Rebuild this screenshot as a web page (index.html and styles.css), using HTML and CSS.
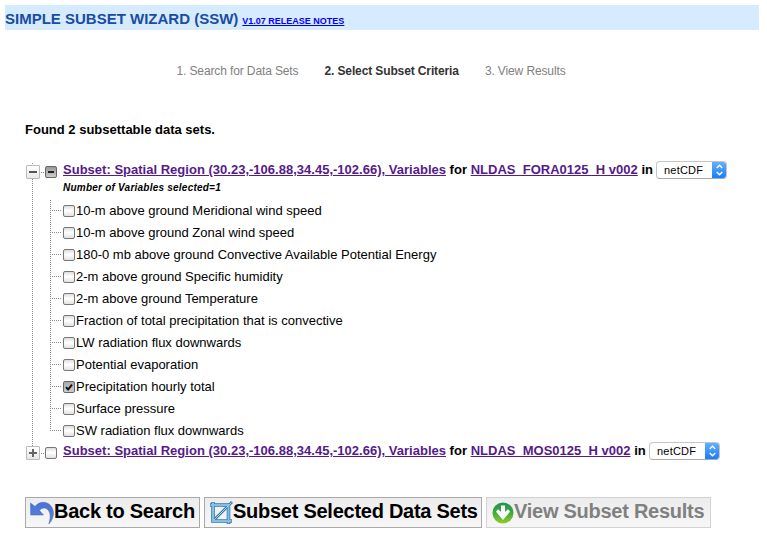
FILE: index.html
```html
<!DOCTYPE html>
<html lang="en">
<head>
<meta charset="utf-8">
<title>Simple Subset Wizard (SSW)</title>
<link rel="stylesheet" href="styles.css">
</head>
<body>
<header class="banner"><h1>SIMPLE SUBSET WIZARD (SSW)</h1><a href="#">V1.07 RELEASE NOTES</a></header>
<nav class="steps"><span>1. Search for Data Sets</span><span class="current">2. Select Subset Criteria</span><span>3. View Results</span></nav>
<p class="found">Found 2 subsettable data sets.</p>
<main class="tree">
  <section class="node first">
    <div class="node-head">
      <span class="toggle"></span><span class="dots"></span><span class="check partial"></span>
      <div class="title"><a href="#">Subset: Spatial Region (30.23,-106.88,34.45,-102.66), Variables</a> for <a href="#">NLDAS_FORA0125_H v002</a> in</div>
      <div class="select"><span>netCDF</span><svg viewBox="0 0 15 18"><path d="M4.7 7 7.5 4.2 10.3 7M4.7 11 7.5 13.8 10.3 11"/></svg></div>
    </div>
    <p class="note">Number of Variables selected=1</p>
    <ul class="vars">
      <li><span class="check"></span><span>10-m above ground Meridional wind speed</span></li>
      <li><span class="check"></span><span>10-m above ground Zonal wind speed</span></li>
      <li><span class="check"></span><span>180-0 mb above ground Convective Available Potential Energy</span></li>
      <li><span class="check"></span><span>2-m above ground Specific humidity</span></li>
      <li><span class="check"></span><span>2-m above ground Temperature</span></li>
      <li><span class="check"></span><span>Fraction of total precipitation that is convective</span></li>
      <li><span class="check"></span><span>LW radiation flux downwards</span></li>
      <li><span class="check"></span><span>Potential evaporation</span></li>
      <li><span class="check on"><svg viewBox="0 0 10 10"><path d="M2 5.2 4.1 7.5 8 2.6"/></svg></span><span>Precipitation hourly total</span></li>
      <li><span class="check"></span><span>Surface pressure</span></li>
      <li><span class="check"></span><span>SW radiation flux downwards</span></li>
    </ul>
  </section>
  <section class="node last">
    <div class="node-head">
      <span class="toggle plus"></span><span class="dots"></span><span class="check"></span>
      <div class="title mos"><a href="#">Subset: Spatial Region (30.23,-106.88,34.45,-102.66), Variables</a> for <a href="#">NLDAS_MOS0125_H v002</a> in</div>
      <div class="select"><span>netCDF</span><svg viewBox="0 0 15 18"><path d="M4.7 7 7.5 4.2 10.3 7M4.7 11 7.5 13.8 10.3 11"/></svg></div>
    </div>
  </section>
</main>
<footer class="actions">
  <button class="back"><svg viewBox="0 0 24 24"><defs><linearGradient id="b" x2="0" y2="1"><stop stop-color="#4773d8"/><stop offset="1" stop-color="#6484cb"/></linearGradient></defs><path fill="url(#b)" stroke="#3b61bd" stroke-width=".5" d="M.5 2 5 5.500C9 .4 16 .1 20 4c5 5 4.500 13-1.200 19C21 16 20.500 11 17.500 8.500 14.500 6 11.500 7 9.500 9.500L13.500 14H.7Z"/></svg><span>Back to Search</span></button>
  <button class="subset"><svg viewBox="0 0 24 24"><g fill="none" stroke="#3679aa" stroke-width="3.600"><path d="M4 1v19H23M1 4h18.500V23"/><path stroke-width="2.600" d="M5 19 23 1"/></g><g fill="none" stroke="#82bfe7" stroke-width="2"><path d="M4 1.500v18.500H22.500M1.500 4h18V22.500"/></g><path d="M5 19 22.500 1.500" stroke="#a5d3ef" stroke-width="1"/></svg><span>Subset Selected Data Sets</span></button>
  <button class="view" disabled><svg viewBox="0 0 22 22"><defs><linearGradient id="g" x2="0" y2="1"><stop stop-color="#199653"/><stop offset=".5" stop-color="#43a83d"/><stop offset="1" stop-color="#8fce28"/></linearGradient></defs><circle cx="11" cy="11" r="10.500" fill="url(#g)"/><path fill="#fff" d="M9 3.500h4v6.500l3-2.700 2 2.400-7 8.300-7-8.300 2-2.400 3 2.700Z"/></svg><span>View Subset Results</span></button>
</footer>
</body>
</html>
```
FILE: styles.css
```css
* { box-sizing: border-box; }
body { margin: 0; padding: 5px 8px 0 5px; width: 767px; height: 545px; overflow: hidden; background: #fff; color: #000; font: 13px "Liberation Sans", Arial, sans-serif; }
h1, p, ul { margin: 0; padding: 0; }
.banner { height: 25px; background: #d7ebff; display: flex; align-items: baseline; gap: 4px; line-height: 27px; }
.banner h1 { font-size: 15px; color: #194ca3; white-space: nowrap; }
.banner a { font-size: 9px; font-weight: bold; color: #00f; }
.steps { height: 16px; margin: 33px 0 0 171.500px; display: flex; gap: 26px; font-size: 12px; line-height: 16px; color: #808080; white-space: nowrap; letter-spacing: -.12px; }
.steps .current { font-weight: bold; color: #333; }
.found { margin: 43px 0 0 20px; height: 16px; line-height: 16px; font-weight: bold; }
.tree { margin: 22px 0 0 20px; height: 302px; }
.node.first { height: 281px; background: repeating-linear-gradient(#888 0 1px, transparent 1px 2px) 7px 3px / 1px 278px no-repeat; }
.node.last { background: repeating-linear-gradient(#888 0 1px, transparent 1px 2px) 7px 0 / 1px 6px no-repeat; }
.node-head { display: flex; height: 20px; padding-left: 1px; }
.toggle { width: 14px; height: 14px; margin-top: 5px; border: 1px solid #bbb; border-radius: 1px; background: linear-gradient(#555, #555) center / 8px 2px no-repeat, linear-gradient(#fff, #e8e8e8); }
.plus { background: linear-gradient(#666, #666) center / 8px 2px no-repeat, linear-gradient(#666, #666) center / 2px 8px no-repeat, linear-gradient(#fff, #e8e8e8); }
.dots { width: 5px; height: 1px; margin-top: 12px; background: repeating-linear-gradient(90deg, transparent 0 1px, #888 1px 2px); }
.check { display: block; flex: none; width: 12px; height: 12px; border: 1px solid #777; border-radius: 2px; background: linear-gradient(#ddd, #fff 45%, #e2e2e2); }
.node-head .check { margin-top: 6px; }
.node-head .partial { background: linear-gradient(#222, #222) center / 6px 2px no-repeat, linear-gradient(#999, #ccc); border-color: #666; }
.on { background: linear-gradient(#aaa, #ccc); border-color: #666; }
.on svg { display: block; width: 10px; height: 10px; fill: none; stroke: #111; stroke-width: 2; }
.title { width: 587px; margin-left: 6px; line-height: 19px; font-weight: bold; white-space: nowrap; letter-spacing: .012px; }
.title.mos { width: 580px; }
.title a { color: #551a8b; text-decoration: underline; }
.select { width: 71px; height: 18px; margin-top: 1px; margin-left: 6px; border: 1px solid #c5c5c5; border-bottom-color: #aaa; border-radius: 4px; display: flex; justify-content: space-between; font-size: 11px; line-height: 17px; overflow: hidden; letter-spacing: .2px; }
.select span { padding-left: 7px; }
.select svg { width: 15px; height: 18px; margin: -1px -1px 0 0; background: linear-gradient(#69b2fa, #147afa); fill: none; stroke: #fff; stroke-width: 1.4; }
.note { margin: 1px 0 0 38px; height: 13px; line-height: 13px; font-size: 10px; font-weight: bold; font-style: italic; letter-spacing: .23px; }
.vars { list-style: none; margin: 6px 0 0 25px; height: 241px; background: repeating-linear-gradient(#888 0 1px, transparent 1px 2px) 0 0 / 1px 232px no-repeat; }
.vars li { height: 22px; display: flex; align-items: center; line-height: 22px; padding-left: 13px; gap: 1px; white-space: nowrap; background: repeating-linear-gradient(90deg, #888 0 1px, transparent 1px 2px) 0 10px / 12px 1px no-repeat; }
.actions { display: flex; gap: 4px; margin: 35px 0 0 20px; }
.actions button { height: 31px; border: 1px solid #a9a9a9; background: linear-gradient(#ececec, #f7f7f7); font: bold 20px "Liberation Sans", Arial, sans-serif; letter-spacing: -.26px; color: #000; padding: 0 0 0 4px; display: flex; align-items: center; white-space: nowrap; }
.actions svg { width: 24px; height: 24px; flex: none; }
.actions span { line-height: 24px; margin-bottom: 3px; }
.back { width: 175px; }
.subset { width: 278px; }
.actions .view { width: 225px; color: #808080; border-color: #d2d2d2; padding-left: 5px; }
.actions .view svg { width: 22px; height: 22px; }
```
